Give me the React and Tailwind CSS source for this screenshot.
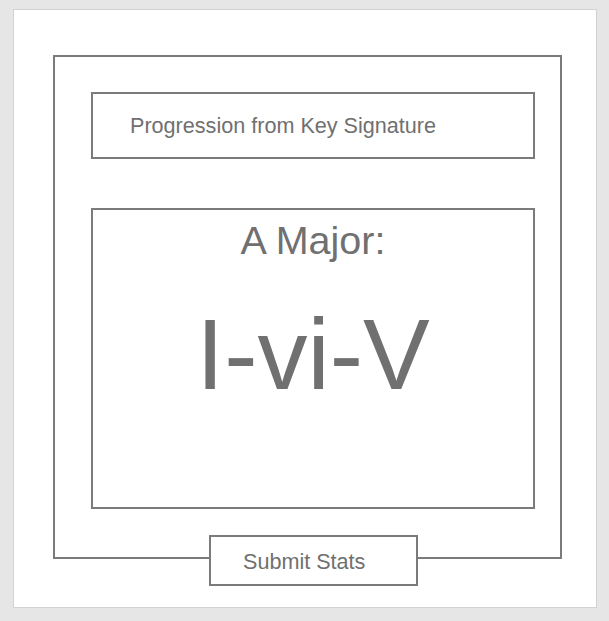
export default function App() {
  const font = { fontFamily: '"Liberation Sans", Arial, sans-serif' }

  return (
    <div className="w-[609px] h-[621px] bg-[#e6e6e6] pt-[9px] pl-[13px] overflow-hidden" style={font}>
      <div className="w-[584px] h-[599px] bg-white border border-[#d2d2d2]">
        {/* outer frame */}
        <div className="ml-[39px] mt-[45px] w-[509px] h-[504px] border-2 border-[#7b7b7b]">
          <div className="ml-[36px] mt-[35px] w-[444px] h-[67px] border-2 border-[#7b7b7b] pl-[37px] pt-[20px]">
            <div className="text-[21.6px] leading-[24px] text-[#707070]">Progression from Key Signature</div>
          </div>

          <div className="ml-[36px] mt-[49px] w-[444px] h-[301px] border-2 border-[#7b7b7b] flex flex-col items-center pt-[11px]">
            <div className="text-[39.5px] leading-none text-[#707070]">A Major:</div>
            <div className="mt-[43px] text-[100px] leading-none text-[#707070]">I-vi-V</div>
          </div>
        </div>

        {/* button sits on the frame's bottom edge */}
        <button className="relative z-10 block -mt-[24px] ml-[195px] w-[209px] h-[51px] bg-white border-2 border-[#7b7b7b] pl-[32px] pt-[3px] text-left">
          <span className="block text-[21.6px] leading-[24px] text-[#707070]">Submit Stats</span>
        </button>
      </div>
    </div>
  )
}
